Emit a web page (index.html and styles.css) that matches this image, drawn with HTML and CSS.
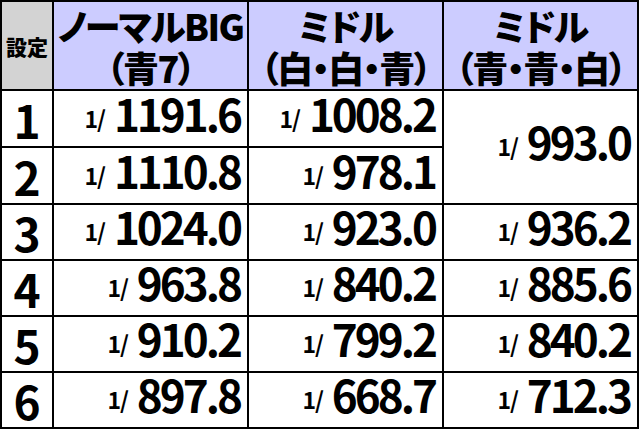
FILE: index.html
```html
<!DOCTYPE html>
<html lang="ja">
<head>
<meta charset="utf-8">
<link rel="stylesheet" href="styles.css">
</head>
<body>
<table class="tbl">
  <colgroup>
    <col class="c-set">
    <col class="c-val">
    <col class="c-val">
    <col class="c-val">
  </colgroup>
  <thead>
    <tr class="head">
      <th class="h-set">設定</th>
      <th class="h-col">ノーマルBIG<br>（青7）</th>
      <th class="h-col">ミドル<br>（白・白・青）</th>
      <th class="h-col">ミドル<br>（青・青・白）</th>
    </tr>
  </thead>
  <tbody>
    <tr class="row tall">
      <td class="set">1</td>
      <td class="val"><span class="frac">1/</span><span class="num">1191.6</span></td>
      <td class="val"><span class="frac">1/</span><span class="num">1008.2</span></td>
      <td class="val" rowspan="2"><span class="frac">1/</span><span class="num">993.0</span></td>
    </tr>
    <tr class="row tall">
      <td class="set">2</td>
      <td class="val"><span class="frac">1/</span><span class="num">1110.8</span></td>
      <td class="val"><span class="frac">1/</span><span class="num">978.1</span></td>
    </tr>
    <tr class="row">
      <td class="set">3</td>
      <td class="val"><span class="frac">1/</span><span class="num">1024.0</span></td>
      <td class="val"><span class="frac">1/</span><span class="num">923.0</span></td>
      <td class="val"><span class="frac">1/</span><span class="num">936.2</span></td>
    </tr>
    <tr class="row">
      <td class="set">4</td>
      <td class="val"><span class="frac">1/</span><span class="num">963.8</span></td>
      <td class="val"><span class="frac">1/</span><span class="num">840.2</span></td>
      <td class="val"><span class="frac">1/</span><span class="num">885.6</span></td>
    </tr>
    <tr class="row">
      <td class="set">5</td>
      <td class="val"><span class="frac">1/</span><span class="num">910.2</span></td>
      <td class="val"><span class="frac">1/</span><span class="num">799.2</span></td>
      <td class="val"><span class="frac">1/</span><span class="num">840.2</span></td>
    </tr>
    <tr class="row">
      <td class="set">6</td>
      <td class="val"><span class="frac">1/</span><span class="num">897.8</span></td>
      <td class="val"><span class="frac">1/</span><span class="num">668.7</span></td>
      <td class="val"><span class="frac">1/</span><span class="num">712.3</span></td>
    </tr>
  </tbody>
</table>
</body>
</html>
```
FILE: styles.css
```css
html, body {
  margin: 0;
  padding: 0;
  background: #ffffff;
}
body {
  font-family: "Noto Sans CJK JP", "Noto Sans", sans-serif;
  font-weight: 700;
  color: #000000;
}
.tbl {
  border-collapse: collapse;
  width: 639px;
  table-layout: fixed;
}
.c-set { width: 52px; }
.c-val { width: 195px; }
.tbl th, .tbl td {
  border: 2px solid #000000;
  padding: 0;
}
.head { height: 89px; }
.h-set {
  background: #d3d3d3;
  font-size: 21px;
  line-height: 24px;
  font-weight: 900;
}
.h-col {
  background: #ccccff;
  font-size: 36px;
  line-height: 42px;
  font-weight: 900;
  font-feature-settings: "palt";
  letter-spacing: -1.5px;
}
.row { height: 56px; }
.row.tall { height: 57px; }
.set {
  text-align: center;
  font-size: 46px;
  line-height: 40px;
}
.tbl .val {
  text-align: right;
  padding-right: 7px;
  white-space: nowrap;
  line-height: 40px;
}
.frac {
  font-size: 23px;
  line-height: 20px;
  letter-spacing: -1px;
  margin-right: 9px;
  vertical-align: 4px;
}
.num {
  font-size: 44px;
  line-height: 40px;
  letter-spacing: -3px;
}
```
